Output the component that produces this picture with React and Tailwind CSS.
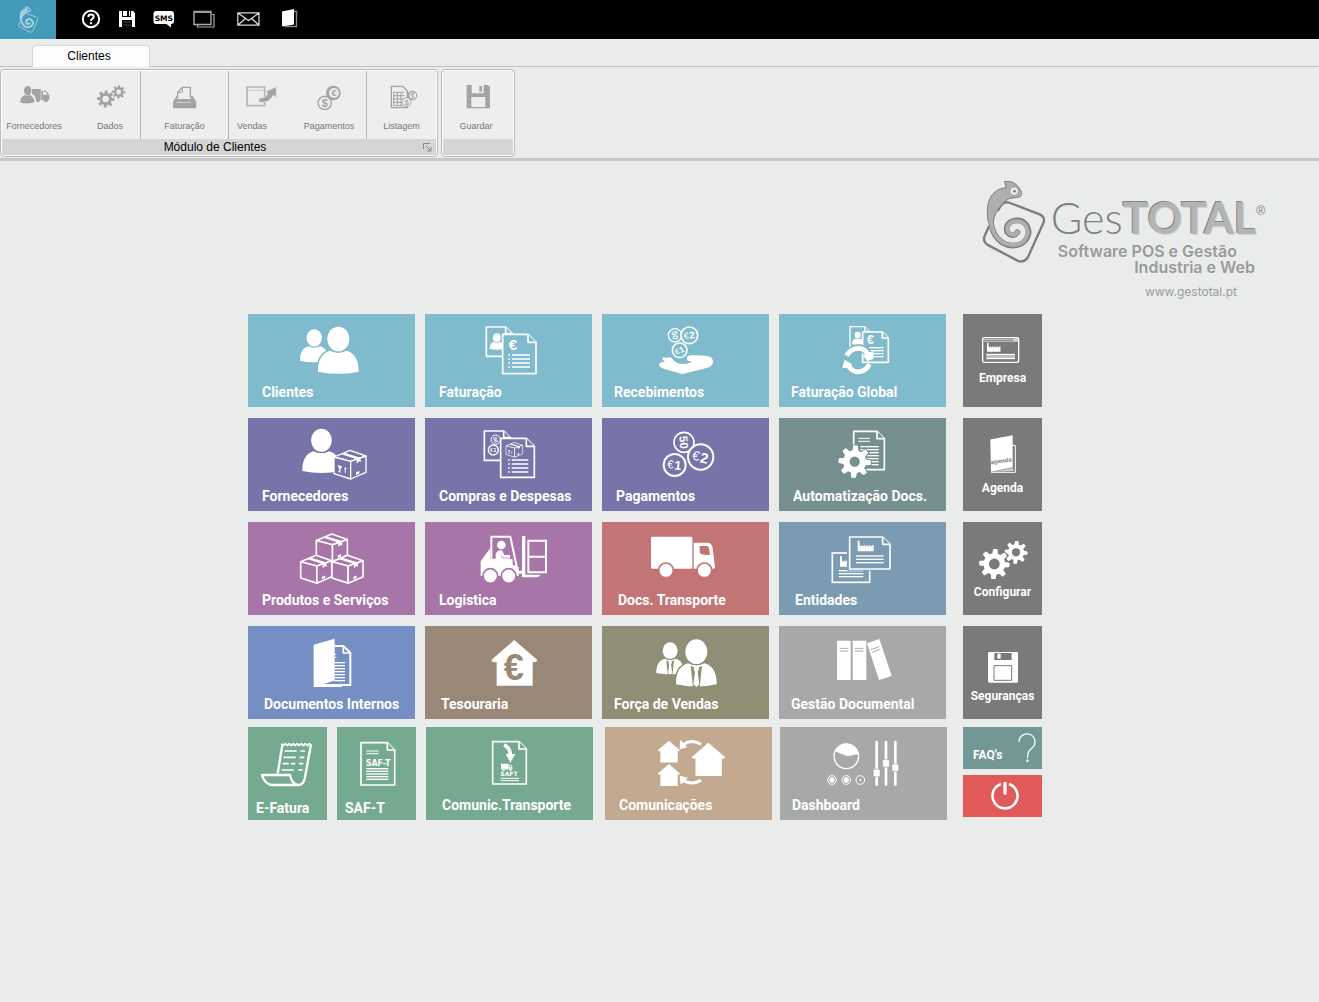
import React from 'react';

const COLORS = {
  cyan: { bg: 'bg-[#80bacd]', ink: 'text-[#80bacd]' },
  violet: { bg: 'bg-[#7674a8]', ink: 'text-[#7674a8]' },
  teal: { bg: 'bg-[#75908e]', ink: 'text-[#75908e]' },
  purple: { bg: 'bg-[#a875a9]', ink: 'text-[#a875a9]' },
  red: { bg: 'bg-[#c37474]', ink: 'text-[#c37474]' },
  steel: { bg: 'bg-[#7a9bb1]', ink: 'text-[#7a9bb1]' },
  blue: { bg: 'bg-[#758ec4]', ink: 'text-[#758ec4]' },
  brown: { bg: 'bg-[#998877]', ink: 'text-[#998877]' },
  olive: { bg: 'bg-[#8e8f75]', ink: 'text-[#8e8f75]' },
  silver: { bg: 'bg-[#a7a9a8]', ink: 'text-[#a7a9a8]' },
  green: { bg: 'bg-[#76aa90]', ink: 'text-[#76aa90]' },
  sand: { bg: 'bg-[#c3a98f]', ink: 'text-[#c3a98f]' },
  gray: { bg: 'bg-[#797a79]', ink: 'text-[#797a79]' },
};

/* ---------- shared pieces of the tile drawings (currentColor = tile colour) ---------- */

const Person = ({ x, y, s = 1, suit }) => (
  <g transform={`translate(${x} ${y}) scale(${s})`}>
    <g stroke="currentColor" strokeWidth="8" paintOrder="stroke">
      <path d="M0 135 C-1 100 13 78 36 72 Q61 84 86 72 C109 78 123 100 122 135 Q61 148 0 135Z" />
      <ellipse cx="61" cy="37" rx="33" ry="37" />
    </g>
    {suit && (
      <>
        <path d="M44 80 L51 144 H71 L78 80 L61 86Z" fill="currentColor" />
        <path d="M55 80 H67 L69 90 L65 97 L70 135 L61 143 L52 135 L57 97 L53 90Z" />
      </>
    )}
  </g>
);

const Page = ({ x, y, w, h, f = 22, sw = 5 }) => (
  <g fill="currentColor" stroke="#fff" strokeWidth={sw} strokeLinejoin="round">
    <path d={`M${x} ${y} H${x + w - f} L${x + w} ${y + f} V${y + h} H${x}Z`} />
    <path d={`M${x + w - f} ${y} V${y + f} H${x + w}`} />
  </g>
);

const Lines = ({ x, y, w, n, step, sw = 5, dots }) => (
  <g stroke="#fff" strokeWidth={sw}>
    {Array.from({ length: n }, (_, i) => (
      <path key={i} d={`M${x} ${y + i * step} h${w}${dots ? ` M${x - 11} ${y + i * step} h5` : ''}`} />
    ))}
  </g>
);

const Box = ({ x, y, s = 1, sw = 4, marks }) => (
  <g transform={`translate(${x} ${y}) scale(${s})`}>
    <g fill="currentColor" stroke="#fff" strokeWidth={sw} strokeLinejoin="round">
      <path d="M48 0 L96 17 L50 33 L0 20Z" />
      <path d="M0 20 L50 33 V86 L0 70Z" />
      <path d="M50 33 L96 17 V66 L50 86Z" />
    </g>
    <path d="M20 11 L30 7 L80 22 V36 L75 33 L68 40 V27Z" />
    <path d="M66 66 l10 -4 v8 l-10 4z" />
    {marks && <path d="M10 44 l14 4 -4 8 -1 8 4 3 -12 -3 4 -2 1 -7z M30 55 l4 -5 4 6 -3 0 0 12 -3 -1 0 -12z" />}
  </g>
);

const TEETH = [0, 45, 90, 135, 180, 225, 270, 315];

const Gear = ({ cx, cy, r, hole = 0.36 }) => (
  <g transform={`translate(${cx} ${cy}) scale(${r / 100})`}>
    <g stroke="currentColor" strokeWidth="14" paintOrder="stroke">
      {TEETH.map((a) => (
        <path key={a} transform={`rotate(${a + 4})`} d="M-20 -60 L-13 -100 H13 L20 -60Z" />
      ))}
      <circle r="72" />
    </g>
    {TEETH.map((a) => (
      <path key={a} transform={`rotate(${a + 4})`} d="M-20 -60 L-13 -100 H13 L20 -60Z" />
    ))}
    <circle r={hole * 100} fill="currentColor" />
  </g>
);

const Coin = ({ cx, cy, r, sw = 5, value, euro, turn = 0 }) => (
  <g>
    <circle cx={cx} cy={cy} r={r} fill="currentColor" stroke="#fff" strokeWidth={sw} />
    <g transform={`translate(${cx} ${cy}) rotate(${turn})`} textAnchor="middle" className="font-['Liberation_Sans']">
      {euro && <text x={-r * 0.38} y={r * 0.34} fontSize={r * 1.05}>€</text>}
      <text x={euro ? r * 0.3 : 0} y={r * 0.42} fontSize={r * 1.15} fontWeight="700">{value}</text>
    </g>
  </g>
);

const House = ({ x, y, s = 1 }) => (
  <path
    transform={`translate(${x} ${y}) scale(${s})`}
    d="M70 0 L139 60 Q138 68 125 66 V137 H17 V66 Q2 68 1 60Z"
  />
);

const Truck = ({ x, y, s = 1 }) => (
  <g transform={`translate(${x} ${y}) scale(${s})`}>
    <rect width="124" height="96" rx="4" />
    <path d="M128 18 H170 Q182 18 185 34 L192 90 Q192 96 186 96 H128Z" />
    <path d="M146 28 H166 Q172 28 174 34 L177 54 Q166 56 150 52 Q146 51 146 46Z" fill="currentColor" />
    <g stroke="currentColor" strokeWidth="5">
      <circle cx="45" cy="101" r="22" />
      <circle cx="160" cy="101" r="22" />
    </g>
  </g>
);

const Factory = ({ x, y, s = 1 }) => (
  <path
    transform={`translate(${x} ${y}) scale(${s})`}
    d="M0 32 V0 H5 L7 18 L14 12 V18 L22 12 V18 L30 12 V18 L38 12 V18 L48 12 V32Z"
  />
);

/* ---------- tile drawings ---------- */

const ClientesArt = () => (
  <>
    <Person x={180} y={73} s={0.7} />
    <Person x={234} y={65} />
  </>
);

const FaturacaoArt = () => (
  <>
    <Page x={739} y={66} w={78} h={88} f={20} />
    <Person x={749} y={85} s={0.35} />
    <Page x={788} y={88} w={100} h={118} f={24} />
    <text x="806" y="136" fontSize="46" fontWeight="700" className="font-['Liberation_Sans']">€</text>
    <Lines x={816} y={150} w={54} n={4} step={12} dots />
  </>
);

const RecebimentosArt = () => (
  <>
    <Coin cx={240} cy={91} r={20} value="50" turn={80} sw={4} />
    <Coin cx={283} cy={91} r={25} value="2" euro turn={-8} />
    <Coin cx={254} cy={136} r={22} value="1" euro turn={-25} />
    <path d="M192 178 Q196 169 210 171 L201 162 Q204 154 214 159 Q228 153 236 166 Q244 177 264 177 Q284 175 292 170 L280 168 Q274 166 276 156 Q280 150 292 151 L332 152 Q354 154 354 170 Q354 182 338 188 L262 207 L206 191 Q192 187 192 178Z" />
  </>
);

const GlobalArt = () => (
  <>
    <Page x={764} y={65} w={58} h={62} f={14} sw={4} />
    <Person x={770} y={80} s={0.28} />
    <Page x={802} y={81} w={77} h={91} f={18} />
    <text x="815" y="118" fontSize="38" fontWeight="700" className="font-['Liberation_Sans']">€</text>
    <Lines x={822} y={128} w={43} n={4} step={9} sw={4} />
    <g fill="none" stroke="currentColor" strokeWidth="24">
      <path d="M754 152 Q768 130 790 130 Q808 130 818 146" />
      <path d="M822 180 Q810 200 788 200 Q766 198 758 182" />
    </g>
    <g fill="none" stroke="#fff" strokeWidth="14">
      <path d="M754 152 Q766 130 790 130 Q808 130 818 148" />
      <path d="M822 178 Q812 200 788 201 Q766 198 758 180" />
    </g>
    <path d="M802 150 L834 138 V162 L816 168Z" />
    <path d="M748 164 L770 178 L764 190 L741 188Z" />
  </>
);

const FornecedoresArt = () => (
  <>
    <Person x={187} y={371} s={0.94} />
    <Box x={282} y={436} marks />
  </>
);

const ComprasArt = () => (
  <>
    <Page x={733} y={378} w={78} h={88} f={20} />
    <Coin cx={767} cy={404} r={14} sw={3} value="50" turn={70} />
    <Coin cx={760} cy={435} r={15} sw={4} value="1" euro />
    <Page x={782} y={400} w={101} h={117} f={24} />
    <Box x={798} y={412} s={0.52} marks />
    <Lines x={815} y={465} w={50} n={4} step={12} dots />
  </>
);

const PagamentosArt = () => (
  <>
    <Coin cx={267} cy={412} r={30} value="50" turn={85} />
    <Coin cx={317} cy={456} r={38} sw={6} value="2" euro turn={12} />
    <Coin cx={239} cy={480} r={33} sw={6} value="1" euro turn={5} />
  </>
);

const AutomatizacaoArt = () => (
  <>
    <Page x={775} y={379} w={92} h={115} />
    <Lines x={789} y={400} w={35} n={2} step={9} sw={3} />
    <Lines x={795} y={425} w={55} n={7} step={9} sw={4} />
    <Gear cx={778} cy={470} r={48} hole={0.32} />
  </>
);

const ProdutosArt = () => (
  <>
    <Box x={229} y={58} s={0.97} sw={5} />
    <Box x={182} y={122} s={0.97} sw={5} />
    <Box x={276} y={122} s={0.97} sw={5} />
  </>
);

const LogisticaArt = () => (
  <>
    <path d="M754 132 V66 H811 L830 156" fill="none" stroke="#fff" strokeWidth="6" strokeLinejoin="round" />
    <path d="M722 140 L751 100 V132 H800 L818 134 V150 L836 157 V184 H722Z" />
    <circle cx="784" cy="91" r="13" />
    <path d="M767 134 V118 Q772 104 786 107 L793 121 H810 V134Z" />
    <path d="M783 122 L788 130 H808" fill="none" stroke="currentColor" strokeWidth="2" />
    <g stroke="currentColor" strokeWidth="5">
      <circle cx="751" cy="184" r="22" />
      <circle cx="806" cy="184" r="22" />
    </g>
    <path d="M846 64 H856 V180 H902 Q898 188 880 188 H846 V177 H834 V168 H846Z" />
    <path d="M865 78 H918 V173 H865Z M865 126 H918" fill="none" stroke="#fff" strokeWidth="6" />
  </>
);

const DocsTransporteArt = () => <Truck x={168} y={66} />;

const EntidadesArt = () => (
  <>
    <rect x="713" y="115" width="112" height="88" fill="none" stroke="#fff" strokeWidth="5" />
    <Factory x={736} y={124} />
    <Lines x={732} y={168} w={74} n={3} step={9} sw={4} />
    <rect x="757" y="60" width="120" height="108" fill="currentColor" />
    <Page x={765} y={67} w={121} h={96} />
    <Factory x={789} y={78} />
    <Lines x={784} y={124} w={83} n={3} step={10} sw={4} />
  </>
);

const DocumentosArt = () => (
  <>
    <path d="M284 393 H310 L331 413 V510 H280" fill="none" stroke="#fff" strokeWidth="6" />
    <path d="M310 390 V414 H331" fill="none" stroke="#fff" strokeWidth="5" />
    <Lines x={284} y={418} w={5} n={2} step={9} sw={3} />
    <Lines x={284} y={443} w={31} n={7} step={9} sw={4} />
    <path d="M221 389 L284 371 V497 L250 507 H306 V516 H221Z" />
  </>
);

const TesourariaArt = () => (
  <>
    <House x={753} y={375} />
    <text x="821" y="494" fontSize="108" fontWeight="700" textAnchor="middle" fill="currentColor" className="font-['Liberation_Sans']">€</text>
  </>
);

const ForcaArt = () => (
  <>
    <Person x={184} y={382} s={0.68} suit />
    <Person x={243} y={373} suit />
  </>
);

const GestaoArt = () => (
  <>
    <rect x="727" y="377" width="41" height="118" rx="2" />
    <rect x="774" y="377" width="41" height="118" rx="2" />
    <path d="M817 385 L854 372 L891 483 L853 495Z" />
    <path
      d="M735 400 h26 M735 408 h26 M780 400 h26 M780 408 h26 M829 404 l25 -9 M832 412 l25 -9"
      stroke="currentColor" strokeWidth="3"
    />
  </>
);

const EFaturaArt = () => (
  <g fill="none" stroke="#fff" strokeWidth="7" strokeLinejoin="round">
    <path d="M127 72 L113 158" />
    <path d="M213 70 L194 174 Q190 192 174 192 H94 Q72 186 66 162 H150 Q156 190 174 192" />
    <path d="M124 68 l6 6 6 -6 6 6 6 -6 6 6 6 -6 6 6 6 -6 6 6 6 -6 6 6 6 -6 6 6 6 -6 6 6" strokeWidth="5" />
    <path d="M134 90 h36 M181 90 h14 M131 109 h36 M179 109 h14 M128 128 h18 M153 128 h13 M177 128 h13 M125 147 h36 M175 147 h13" strokeWidth="5" />
  </g>
);

const SaftArt = () => (
  <>
    <Page x={363} y={65} w={101} h={127} />
    <Lines x={379} y={90} w={37} n={2} step={8} sw={3} />
    <text x="377" y="135" fontSize="24" fontWeight="700" className="font-['DejaVu_Sans']">SAF-T</text>
    <Lines x={379} y={143} w={66} n={5} step={8} sw={4} />
  </>
);

const ComunicTransporteArt = () => (
  <>
    <Page x={758} y={65} w={101} h={127} />
    <path d="M792 75 Q811 82 811 106" fill="none" stroke="#fff" strokeWidth="11" />
    <path d="M797 102 H826 L811 128Z" />
    <Truck x={783} y={131} s={0.18} />
    <text x="781" y="168" fontSize="18" fontWeight="700" className="font-['DejaVu_Sans']">SAFT</text>
    <Lines x={782} y={175} w={55} n={2} step={7} sw={3} />
  </>
);

const ComunicacoesArt = () => (
  <>
    <House x={190} y={62} s={0.48} />
    <House x={190} y={132} s={0.48} />
    <House x={291} y={68} s={0.73} />
    <g fill="none" stroke="#fff" strokeWidth="9">
      <path d="M320 73 Q292 56 266 74" />
      <path d="M320 181 Q292 196 266 182" />
    </g>
    <path d="M257 59 L279 82 L256 88Z M256 167 L281 173 L259 194Z" />
  </>
);

const DashboardArt = () => (
  <>
    <circle cx="754" cy="109" r="37" fill="none" stroke="#fff" strokeWidth="4" />
    <path d="M757 109 L719 93 A38 38 0 0 1 791 102Z" />
    <g fill="none" stroke="#fff" strokeWidth="3">
      <circle cx="711" cy="180" r="13" />
      <circle cx="754" cy="180" r="13" />
      <circle cx="796" cy="180" r="13" />
    </g>
    <circle cx="711" cy="180" r="8" />
    <circle cx="754" cy="180" r="8" />
    <circle cx="796" cy="180" r="3" />
    <path d="M845 66 V194 M873 66 V194 M901 66 V194" stroke="#fff" strokeWidth="8" strokeLinecap="round" />
    <g stroke="currentColor" strokeWidth="2">
      <rect x="835" y="148" width="20" height="22" rx="3" />
      <rect x="863" y="119" width="20" height="22" rx="3" />
      <rect x="891" y="132" width="20" height="22" rx="3" />
    </g>
  </>
);

const EmpresaArt = () => (
  <>
    <rect x="98" y="98" width="108" height="74" rx="5" fill="none" stroke="#fff" strokeWidth="4" />
    <path d="M100 104 H186 M102 109 H204" stroke="#fff" strokeWidth="3" opacity=".6" />
    <path d="M188 104 h16" stroke="#fff" strokeWidth="7" opacity=".7" />
    <Factory x={111} y={113} s={0.84} />
    <Lines x={109} y={149} w={86} n={2} step={11} />
    <path d="M109 155 h86" stroke="#fff" strokeWidth="4" opacity=".5" />
  </>
);

const AgendaArt = () => (
  <>
    <path d="M187 421 H196 V502 H123" fill="none" stroke="#fff" strokeWidth="3" />
    <path d="M121 405 Q122 402 128 402 L188 391 V487 L123 500Z" />
    <path d="M128 500 L190 488 V498Z" opacity=".6" />
    <text x="123" y="478" fontSize="18" fontWeight="700" fill="currentColor" transform="rotate(-8 123 478)" className="font-['Liberation_Sans']">agenda</text>
  </>
);

const ConfigurarArt = () => (
  <>
    <Gear cx={198} cy={113} r={34} />
    <Gear cx={133} cy={148} r={45} />
  </>
);

const SegurancasArt = () => (
  <>
    <path d="M120 411 H202 Q206 411 206 415 V499 Q206 503 202 503 H120 L116 499 V415 Q116 411 120 411Z" />
    <path d="M135 414 H187 V435 H135Z" fill="currentColor" />
    <path d="M144 416 H154 V431 H144Z" />
    <path d="M134 452 H187 V496 H134Z" fill="none" stroke="currentColor" strokeWidth="3" />
  </>
);

/* ---------- tiles ---------- */

function Tile({ label, color, view, art: Art, pad = 'pl-3.5' }) {
  return (
    <button type="button" className={`flex h-[93px] w-[167px] shrink-0 flex-col items-start ${COLORS[color].bg}`}>
      <svg viewBox={view} fill="#fff" aria-hidden="true" className={`h-[68px] w-full ${COLORS[color].ink}`}>
        <Art />
      </svg>
      <span className={`${pad} text-sm leading-5 font-bold whitespace-nowrap text-white`}>{label}</span>
    </button>
  );
}

function SmallTile({ label, color, view, art: Art }) {
  return (
    <button type="button" className={`flex h-[93px] w-[79px] shrink-0 flex-col items-start ${COLORS[color].bg}`}>
      <svg viewBox={view} fill="#fff" aria-hidden="true" className={`h-[71px] w-full ${COLORS[color].ink}`}>
        <Art />
      </svg>
      <span className="pl-2 text-sm leading-5 font-bold whitespace-nowrap text-white">{label}</span>
    </button>
  );
}

function SideTile({ label, view, art: Art, size = 'h-[62px]' }) {
  return (
    <button type="button" className={`flex h-[93px] w-full flex-col items-center ${COLORS.gray.bg}`}>
      <svg viewBox={view} fill="#fff" aria-hidden="true" className={`${size} w-full ${COLORS.gray.ink}`}>
        <Art />
      </svg>
      <span className="text-xs leading-4 font-bold whitespace-nowrap text-white">{label}</span>
    </button>
  );
}

const ROWS = [
  [
    { label: 'Clientes', color: 'cyan', view: '24 27 501 204', art: ClientesArt },
    { label: 'Faturação', color: 'cyan', view: '555 27 501 204', art: FaturacaoArt },
    { label: 'Recebimentos', color: 'cyan', view: '21 27 501 204', art: RecebimentosArt, pad: 'pl-3' },
    { label: 'Faturação Global', color: 'cyan', view: '551 27 501 204', art: GlobalArt, pad: 'pl-3' },
  ],
  [
    { label: 'Fornecedores', color: 'violet', view: '24 339 501 204', art: FornecedoresArt },
    { label: 'Compras e Despesas', color: 'violet', view: '555 339 501 204', art: ComprasArt },
    { label: 'Pagamentos', color: 'violet', view: '21 339 501 204', art: PagamentosArt },
    { label: 'Automatização Docs.', color: 'teal', view: '551 339 501 204', art: AutomatizacaoArt },
  ],
  [
    { label: 'Produtos e Serviços', color: 'purple', view: '24 22 501 204', art: ProdutosArt },
    { label: 'Logistica', color: 'purple', view: '555 22 501 204', art: LogisticaArt },
    { label: 'Docs. Transporte', color: 'red', view: '21 22 501 204', art: DocsTransporteArt, pad: 'pl-4' },
    { label: 'Entidades', color: 'steel', view: '553 22 501 204', art: EntidadesArt, pad: 'pl-4' },
  ],
  [
    { label: 'Documentos Internos', color: 'blue', view: '24 333 501 204', art: DocumentosArt, pad: 'pl-4' },
    { label: 'Tesouraria', color: 'brown', view: '555 333 501 204', art: TesourariaArt, pad: 'pl-4' },
    { label: 'Força de Vendas', color: 'olive', view: '21 333 501 204', art: ForcaArt, pad: 'pl-3' },
    { label: 'Gestão Documental', color: 'silver', view: '553 333 501 204', art: GestaoArt, pad: 'pl-3' },
  ],
];

/* ---------- logo ---------- */

const Chameleon = ({ className, outline, body, eye }) => (
  <svg viewBox="33 26 196 255" aria-hidden="true" className={className} fill="none">
    <path
      d="M80 122 L90 106 Q99 91 116 97 L207 132 Q225 141 218 158 L171 262 Q161 277 143 273 L50 224 Q34 213 41 197 L54 168"
      stroke={outline} strokeWidth="7"
    />
    <path
      d="M60 140 C58 195 92 228 130 226 C168 222 184 188 166 163 C150 143 114 147 108 170 C104 192 128 204 140 186"
      stroke={outline} strokeWidth="17" strokeLinecap="round"
    />
    <path
      d="M51 152 C45 108 52 72 84 57 L106 51 L101 33 Q132 27 150 60 Q156 74 148 79 L116 84 Q104 88 94 102 Q72 122 67 155Z"
      fill={body} stroke={outline} strokeWidth="3"
    />
    <path
      d="M60 140 C58 195 92 226 130 224 C166 220 180 188 164 165 C150 147 117 149 110 170 C106 190 128 202 140 186"
      stroke={body} strokeWidth="12" strokeLinecap="round"
    />
    <circle cx="130" cy="62" r="13" fill={eye} stroke={outline} strokeWidth="2" />
    <circle cx="131" cy="62" r="4" fill={outline} />
  </svg>
);

function Brand() {
  return (
    <div className="flex items-start justify-end gap-1 pt-[18px] pr-[54px] text-[#999b9a]">
      <Chameleon className="h-[85px] w-[65px]" outline="#7c7e7d" body="#aeb0af" eye="#eaeceb" />
      <div className="flex flex-col items-end pt-3.5 whitespace-nowrap">
        <div className="flex items-start font-['Lato'] text-[43px] leading-[50px]">
          <span className="font-light text-[#7f8180]">Ges</span>
          <span className="font-bold text-[#b3b5b4] [text-shadow:-1px_-1px_0_#858786,1px_1px_0_#d4d6d5]">TOTAL</span>
          <sup className="top-0 pt-2.5 font-['Liberation_Sans'] text-xs leading-4 text-[#7f8180]">®</sup>
        </div>
        <p className="pr-7 font-['Inter'] text-base leading-4 font-semibold">Software POS e Gestão</p>
        <p className="pr-2.5 font-['Inter'] text-base leading-4 font-semibold">Industria e Web</p>
        <a href="#site" className="mt-[9px] pr-7 font-['Inter'] text-xs leading-4">www.gestotal.pt</a>
      </div>
    </div>
  );
}

/* ---------- top bar ---------- */

function TopBar() {
  return (
    <header className="flex h-[39px] items-center bg-black">
      <button type="button" aria-label="GesTOTAL" className="flex h-full w-14 items-center justify-center bg-[#439bb9]">
        <Chameleon className="h-[27px] w-[21px]" outline="#b9dfeb" body="#9fd0e0" eye="#439bb9" />
      </button>
      <nav className="flex items-center gap-[18px] pb-0.5 pl-[25px] text-white">
        <button type="button" aria-label="Ajuda">
          <svg viewBox="0 0 20 20" className="size-5" fill="none" stroke="currentColor">
            <circle cx="10" cy="10" r="8.2" strokeWidth="2" />
            <path d="M7.3 8 Q7.4 5.6 10 5.6 Q12.6 5.6 12.7 7.8 Q12.7 9.2 11 10 Q10 10.6 10 12" strokeWidth="2" />
            <path d="M10 13.2 V15.2" strokeWidth="2.2" />
          </svg>
        </button>
        <button type="button" aria-label="Guardar">
          <svg viewBox="0 0 16 16" className="size-4" fill="currentColor">
            <path d="M0 0 H3 V6 H12 V0 H14 L16 2 V16 H13 V9 H3 V16 H0Z M4 0 H8 V5 H4Z M10 0 H11 V5 H10Z" />
            <path d="M4 11 H12 M4 14 H12" stroke="#444" strokeWidth="1" />
          </svg>
        </button>
        <button type="button" aria-label="SMS">
          <svg viewBox="0 0 22 18" className="h-[18px] w-[22px]">
            <path d="M3 1 H18 Q21 1 21 4 V11 Q21 14 18 14 V17.5 L13.5 14 H3 Q0.500 14 0.500 11 V4 Q0.500 1 3 1Z" fill="#fff" />
            <text x="10.8" y="10.500" fontSize="7.500" fontWeight="700" textAnchor="middle" fill="#000" className="font-['DejaVu_Sans']">SMS</text>
          </svg>
        </button>
        <button type="button" aria-label="Janelas">
          <svg viewBox="0 0 22 18" className="h-[18px] w-[22px]" fill="none" stroke="#aaa">
            <path d="M1 1.500 H18 V14.500 H1Z" strokeWidth="1.4" />
            <path d="M1 2 H18" strokeWidth="2" stroke="#999" />
            <path d="M19 4.500 H21 V17 H4.500 V15" strokeWidth="1.2" />
          </svg>
        </button>
        <button type="button" aria-label="Email" className="pl-1">
          <svg viewBox="0 0 23 14" className="h-3.5 w-[23px]" fill="none" stroke="#ddd" strokeWidth="1.2">
            <path d="M0.800 0.800 H22 V13.200 H0.800Z M1 1 L11.500 8.500 L22 1 M1 13 L8.500 6.500 M22 13 L14.500 6.500" />
          </svg>
        </button>
        <button type="button" aria-label="Agenda" className="pl-1">
          <svg viewBox="0 0 16 19" className="h-[19px] w-4">
            <path d="M0 2.500 L12 0 V15.500 L1 17.500 Q0 17.500 0 16Z" fill="#fff" />
            <path d="M12 2.500 H14.500 V17.500 H3" fill="none" stroke="#888" strokeWidth="1.400" />
          </svg>
        </button>
      </nav>
    </header>
  );
}

/* ---------- ribbon ---------- */

function RibbonButton({ label, className, children, iconWidth = 'w-8', view = '0 0 96 75' }) {
  return (
    <button type="button" className={`flex flex-col pt-3.5 ${className}`}>
      <svg viewBox={view} aria-hidden="true" className={`h-[25px] ${iconWidth} text-[#eeeeee]`} fill="#a3a3a3">
        {children}
      </svg>
      <span className="mt-2.5 text-[9px] leading-3 text-[#777777]">{label}</span>
    </button>
  );
}

// gear for the ribbon, drawn in the disabled gray
const FlatGear = ({ cx, cy, r }) => (
  <g transform={`translate(${cx} ${cy}) scale(${r / 100})`}>
    {TEETH.map((a) => (
      <path key={a} transform={`rotate(${a + 4})`} d="M-20 -55 L-15 -100 H15 L20 -55Z" />
    ))}
    <circle r="54" fill="none" stroke="#a3a3a3" strokeWidth="34" />
  </g>
);

const Money = ({ x, y, s = 1 }) => (
  <g transform={`translate(${x} ${y}) scale(${s})`} fontWeight="700" textAnchor="middle" className="font-['Liberation_Sans']">
    <circle cx="50" cy="22" r="22" />
    <circle cx="52" cy="22" r="15" fill="currentColor" />
    <text x="52" y="32" fontSize="29">€</text>
    <circle cx="24" cy="52" r="20" fill="currentColor" stroke="#a3a3a3" strokeWidth="4" />
    <text x="24" y="63" fontSize="32">$</text>
  </g>
);

function Ribbon() {
  return (
    <section className="border-b-3 border-[#c6c8c7] pt-1.5">
      <div className="flex items-end" role="tablist">
        <span className="h-px w-8 bg-[#c3c3c3]" />
        <button
          type="button"
          role="tab"
          aria-selected="true"
          className="h-[22px] w-[118px] rounded-t border border-b-0 border-[#d6d6d6] bg-[#fdfdfd] pr-1 pb-0.5 text-xs leading-4 text-black"
        >
          Clientes
        </button>
        <span className="h-px flex-1 bg-[#c3c3c3]" />
      </div>

      <div className="flex gap-[3px] pt-0.5 pb-px">
        <div className="flex w-[438px] flex-col rounded border border-[#bbbbbb] bg-white p-px">
          <div className="flex h-[68px] divide-x divide-[#b5b5b5] bg-[#eeeeee]">
            <div className="flex w-[139px] justify-between">
              <RibbonButton label="Fornecedores" className="w-16 items-center">
                <path d="M7 53 Q6 36 20 30 Q27 35 36 30 Q48 35 50 52 Q28 58 7 53Z" />
                <ellipse cx="29" cy="17" rx="11" ry="14" />
                <path d="M42 12 H68 V45 H54 Q52 30 42 27Z M70 17 H84 L94 30 V46 H70Z" />
                <path d="M75 20 H83 L88 29 H75Z" fill="currentColor" />
                <circle cx="60" cy="46" r="6" />
                <circle cx="84" cy="46" r="6" />
              </RibbonButton>
              <RibbonButton label="Dados" className="w-[60px] items-center" view="-11 0 96 75">
                <FlatGear cx={24} cy={42} r={26} />
                <FlatGear cx={63} cy={21} r={20} />
              </RibbonButton>
            </div>
            <div className="flex w-[88px] justify-center">
              <RibbonButton label="Faturação" className="items-center">
                <path d="M26 38 V22 L40 7 H64 V38" fill="none" stroke="#a3a3a3" strokeWidth="4" />
                <path d="M40 7 V22 H26" fill="none" stroke="#a3a3a3" strokeWidth="3" />
                <path d="M12 50 L22 34 H26 V42 H66 V34 H72 L82 50 V66 Q82 70 78 70 H16 Q12 70 12 66Z" />
                <path d="M22 52 H66" stroke="currentColor" strokeWidth="2" />
              </RibbonButton>
            </div>
            <div className="flex w-[138px] justify-between">
              <RibbonButton label="Vendas" className="items-start pl-2" iconWidth="w-[40px]" view="0 0 120 75">
                <path d="M30 6 H83 V62 H30Z" fill="none" stroke="#b5b5b5" strokeWidth="5" />
                <path d="M30 16 H80" stroke="#b5b5b5" strokeWidth="2" />
                <path d="M66 52 V40 Q88 40 92 24 L84 20 L118 5 V38 L109 31 Q96 56 66 52Z" stroke="currentColor" strokeWidth="2" />
              </RibbonButton>
              <RibbonButton label="Pagamentos" className="w-[74px] items-center">
                <Money x={11} y={2} />
              </RibbonButton>
            </div>
            <div className="flex flex-1 justify-center">
              <RibbonButton label="Listagem" className="items-center">
                <path d="M16 4 H50 L64 18 V68 H16Z" fill="none" stroke="#a3a3a3" strokeWidth="4" />
                <path d="M22 22 H56 M22 32 H56 M22 42 H56 M22 52 H56 M22 62 H56 M23 22 V62 M34 22 V62 M45 22 V62" stroke="#a3a3a3" strokeWidth="3" />
                <Money x={46} y={17} s={0.66} />
              </RibbonButton>
            </div>
          </div>
          <div className="relative h-4 bg-[#d5d5d5] pr-2 text-center text-xs leading-4 text-black">
            Módulo de Clientes
            <svg viewBox="0 0 9 9" aria-hidden="true" className="absolute top-1 right-1 size-[9px]" fill="none" stroke="#888">
              <path d="M0.500 6 V0.500 H7 M3 3 L7.500 7.500 M8 4 V8 H4" />
            </svg>
          </div>
        </div>

        <div className="flex w-[74px] flex-col rounded border border-[#bbbbbb] bg-white p-px">
          <div className="flex h-[68px] justify-center bg-[#eeeeee] pr-1">
            <RibbonButton label="Guardar" className="items-center" view="-8 0 96 75">
              <path d="M12 0 H76 L82 6 V70 H12Z" />
              <path d="M27 0 H63 V25 H27Z M26 36 H68 V66 H26Z" fill="currentColor" />
              <path d="M50 3 H58 V20 H50Z" />
            </RibbonButton>
          </div>
          <div className="h-4 bg-[#d5d5d5]" />
        </div>
      </div>
    </section>
  );
}

/* ---------- page ---------- */

function App() {
  return (
    <div className="min-h-screen bg-[#eaeceb] font-['Liberation_Sans',sans-serif]">
      <TopBar />
      <Ribbon />
      <Brand />

      <main className="flex justify-center gap-4 pt-3.5 pr-[29px] pb-10 font-['Roboto',sans-serif]">
        <div className="flex flex-col gap-2">
          <div className="flex flex-col gap-[11px]">
            {ROWS.map((row) => (
              <div key={row[0].label} className="flex gap-2.5">
                {row.map((tile) => (
                  <Tile key={tile.label} {...tile} />
                ))}
              </div>
            ))}
          </div>
          <div className="flex gap-3">
            <div className="flex gap-2.5">
              <SmallTile label="E-Fatura" color="green" view="24 18 237 213" art={EFaturaArt} />
              <SmallTile label="SAF-T" color="green" view="291 18 237 213" art={SaftArt} />
              <Tile label="Comunic.Transporte" color="green" view="558 21 501 204" art={ComunicTransporteArt} pad="pl-4" />
            </div>
            <div className="flex gap-2">
              <Tile label="Comunicações" color="sand" view="32 21 501 204" art={ComunicacoesArt} />
              <Tile label="Dashboard" color="silver" view="555 21 501 204" art={DashboardArt} pad="pl-3" />
            </div>
          </div>
        </div>

        <aside className="flex w-[79px] flex-col gap-2">
          <div className="flex flex-col gap-[11px]">
            <SideTile label="Empresa" view="39 27 237 168" art={EmpresaArt} size="h-14" />
            <SideTile label="Agenda" view="39 339 237 186" art={AgendaArt} />
            <SideTile label="Configurar" view="39 22 237 186" art={ConfigurarArt} />
            <SideTile label="Seguranças" view="41 333 237 186" art={SegurancasArt} />
          </div>
          <div className="flex flex-col gap-1.5">
            <button type="button" className="flex h-[42px] items-end justify-between bg-[#739795] pr-1.5 pl-2.5 text-white">
              <span className="pb-1.5 text-xs leading-4 font-bold">FAQ's</span>
              <svg viewBox="0 0 18 30" aria-hidden="true" className="mb-1.5 h-[30px] w-[18px]" fill="none" stroke="#fff" strokeWidth="1.3">
                <path d="M1 9 A8 8 0 1 1 13.500 15.500 Q9.500 18 9.500 25" />
                <path d="M9.500 26.500 V29" strokeWidth="2" />
              </svg>
            </button>
            <button type="button" aria-label="Sair" className="flex h-[42px] items-center justify-center bg-[#e15a5a] pl-1">
              <svg viewBox="0 0 28 28" className="size-7" fill="none" stroke="#fff">
                <path d="M10 2 A12.500 12.500 0 1 0 18 2" strokeWidth="2.600" />
                <path d="M14 0 V12.500" strokeWidth="3.200" />
              </svg>
            </button>
          </div>
        </aside>
      </main>
    </div>
  );
}

export default App;
